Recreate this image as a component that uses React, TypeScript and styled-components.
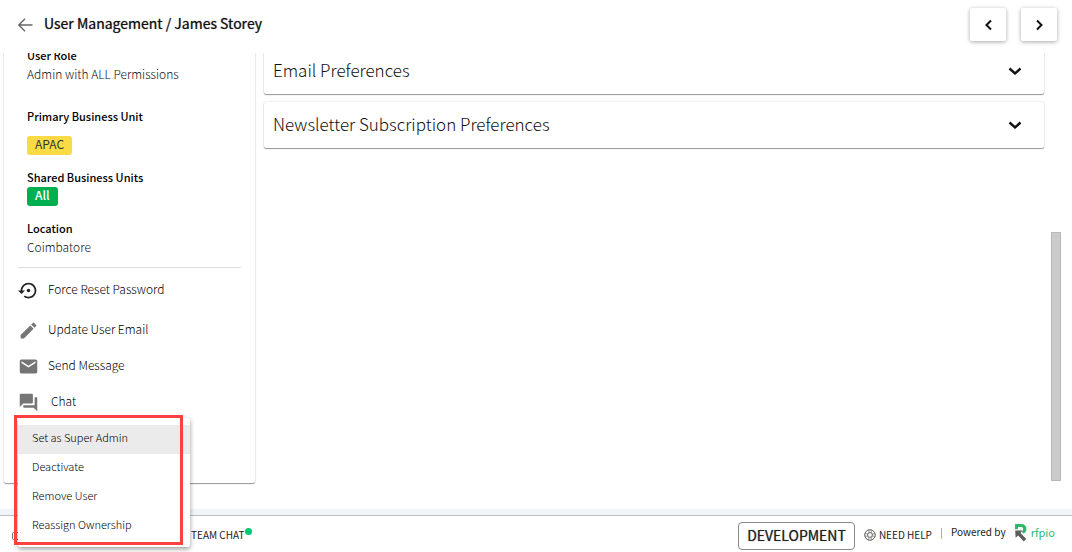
import React from "react";
import styled, { createGlobalStyle } from "styled-components";
import { MdEdit, MdEmail, MdForum, MdSettingsBackupRestore } from "react-icons/md";

const GlobalStyle = createGlobalStyle`
  *, *::before, *::after { box-sizing: border-box; }
  body {
    margin: 0;
    background: #fff;
    color: #222;
    font-family: "Noto Sans CJK SC", "Noto Sans", sans-serif;
    font-size: 12px;
    line-height: 18px;
  }
  button { font: inherit; color: inherit; border: 0; background: none; padding: 0; cursor: pointer; }
  a { color: inherit; text-decoration: none; }
  h1, h2, dl, dt, dd, ul { margin: 0; padding: 0; font: inherit; list-style: none; }
`;

const Page = styled.div`
  position: relative;
  display: flex;
  flex-direction: column;
  height: 100vh;
  overflow: hidden;
`;

const Header = styled.header`
  display: flex;
  flex: none;
  align-items: center;
  height: 53px;
  padding: 0 15px 4px 17px;
`;

const BackLink = styled.a`
  display: flex;
  margin-right: 11px;
`;

const Title = styled.h1`
  flex: 1;
  padding-bottom: 3px;
  font-size: 14px;
  color: #111;
  text-shadow: 0 0 1px rgba(0, 0, 0, 0.6);
`;

const Pager = styled.div`
  display: flex;
  gap: 15px;
`;

const PagerButton = styled.button`
  display: flex;
  align-items: center;
  justify-content: center;
  width: 36px;
  height: 33px;
  border-radius: 2px;
  background: #fff;
  box-shadow: 0 1px 4px rgba(0, 0, 0, 0.35);
`;

const Scroller = styled.main`
  display: flex;
  flex: 1;
  align-items: flex-start;
  min-height: 0;
  padding-right: 11px;
  overflow: hidden;
`;

const cardShadow = "0 1px 1px rgba(0, 0, 0, 0.38), 0 0 2px rgba(0, 0, 0, 0.2)";

const ProfileCard = styled.aside`
  flex: none;
  width: 251px;
  margin: -17px 9px 0 4px;
  padding: 10px 14px 63px;
  border-radius: 2px;
  background: #fff;
  box-shadow: ${cardShadow};
`;

const Details = styled.dl`
  display: flex;
  flex-direction: column;
  gap: 13px;
  padding: 0 9px 10px;
  border-bottom: 1px solid #ddd;
`;

const Detail = styled.div<{ $roomy?: boolean; $gap?: number }>`
  display: flex;
  flex-direction: column;
  align-items: flex-start;
  gap: ${(p) => p.$gap ?? 0}px;
  margin-top: ${(p) => (p.$roomy ? 10 : 0)}px;
`;

const Label = styled.dt`
  font-size: 11px;
  font-weight: 500;
  color: #000;
`;

const Value = styled.dd`
  font-weight: 300;
  color: #111;
  line-height: 20px;
`;

const Badge = styled.dd<{ $green?: boolean }>`
  padding: 0 8px 3px;
  border-radius: 3px;
  background: ${(p) => (p.$green ? "#00b050" : "#fadb46")};
  color: ${(p) => (p.$green ? "#fff" : "#333")};
  font-weight: ${(p) => (p.$green ? 500 : 400)};
  line-height: 16px;
`;

const Actions = styled.ul`
  display: flex;
  flex-direction: column;
`;

const Action = styled.button<{ $tall?: boolean; $dark?: boolean; $gap?: number }>`
  display: flex;
  align-items: center;
  gap: ${(p) => p.$gap ?? 9}px;
  width: 100%;
  height: ${(p) => (p.$tall ? 44 : 36)}px;
  color: #000;
  font-weight: 300;

  svg {
    width: 21px;
    height: 21px;
    color: ${(p) => (p.$dark ? "#222" : "#757575")};
  }

  span {
    padding-bottom: 3px;
  }
`;

const Panels = styled.section`
  display: flex;
  flex: 1;
  flex-direction: column;
  gap: 8px;
  min-width: 0;
  margin-top: -5px;
`;

const Panel = styled.button`
  display: flex;
  align-items: center;
  justify-content: space-between;
  height: 46px;
  padding: 0 22px 0 9px;
  border-radius: 2px;
  background: #fff;
  box-shadow: ${cardShadow};
  color: #111;
  font-size: 17px;
  font-weight: 300;

  span {
    padding-bottom: 3px;
  }
`;

const Thumb = styled.div`
  flex: none;
  width: 10px;
  height: 249px;
  margin: 179px 0 0 7px;
  border: 1px solid #b9b9b9;
  background: #cbcbcb;
`;

const Footer = styled.footer`
  display: flex;
  flex: none;
  align-items: center;
  justify-content: space-between;
  height: 43px;
  padding: 4px 17px 0 11px;
  border-top: 6px solid #f1f5f9;
  box-shadow: inset 0 1px #b9bec4;
  font-size: 10px;
`;

const FooterGroup = styled.div`
  display: flex;
  align-items: center;
`;

const ChatLink = styled.a`
  display: flex;
  gap: 1px;
  margin-left: 168px;
  padding-bottom: 1px;
`;

const OnlineDot = styled.span`
  width: 7px;
  height: 7px;
  margin-top: 2px;
  border-radius: 50%;
  background: #00c875;
`;

const EnvButton = styled.button`
  height: 28px;
  padding: 0 8px 1px;
  border: 1px solid #888;
  border-radius: 4px;
  font-size: 14px;
  text-shadow: 0 0 1px rgba(0, 0, 0, 0.6);
`;

const HelpLink = styled.a`
  display: flex;
  align-items: center;
  gap: 3px;
  margin-left: 9px;
  padding-bottom: 1px;
`;

const Divider = styled.span`
  width: 1px;
  height: 11px;
  margin: 0 9px 4px 9px;
  background: #e8a07c;
`;

const Powered = styled.a`
  display: flex;
  align-items: center;
  gap: 9px;
  padding-bottom: 7px;
`;

const Brand = styled.span`
  display: flex;
  align-items: center;
  gap: 4px;
  color: #2fb86b;
  font-size: 11px;

  svg {
    margin-top: 2px;
  }
`;

const Menu = styled.div`
  position: absolute;
  top: 418px;
  left: 18px;
  width: 172px;
  padding: 7px 0 6px;
  border-radius: 2px;
  background: #fff;
  box-shadow: 0 2px 5px rgba(0, 0, 0, 0.4);
`;

const MenuItem = styled.button<{ $active?: boolean }>`
  display: block;
  width: 100%;
  height: 29px;
  padding: 0 14px 6px;
  background: ${(p) => (p.$active ? "#ebebeb" : "transparent")};
  color: #000;
  font-size: 11px;
  font-weight: 300;
  text-align: left;
`;

const Highlight = styled.div`
  position: absolute;
  top: 415px;
  left: 14px;
  width: 169px;
  height: 130px;
  border: 3px solid #fb4141;
  pointer-events: none;
`;

function Chevron({ d, weight = 2 }: { d: string; weight?: number }) {
  return (
    <svg width="14" height="14" viewBox="0 0 14 14" fill="none" stroke="#111" strokeWidth={weight} aria-hidden="true">
      <path d={d} />
    </svg>
  );
}

function HelpIcon() {
  return (
    <svg width="12" height="12" viewBox="0 0 12 12" fill="none" stroke="#555" aria-hidden="true">
      <circle cx="6" cy="6" r="5.3" strokeWidth="0.9" />
      <circle cx="6" cy="6" r="2.4" strokeWidth="0.9" />
      <path d="M4.8 0.9V3.8M7.2 0.9V3.8M4.8 8.2V11.1M7.2 8.2V11.1M0.9 4.8H3.8M0.9 7.2H3.8M8.2 4.8H11.1M8.2 7.2H11.1" strokeWidth="0.6" />
    </svg>
  );
}

function RfpioLogo() {
  return (
    <svg width="12" height="18" viewBox="0 0 12 18" aria-hidden="true">
      <path d="M0 0H6.5A5 5 0 0 1 11.5 5A5 5 0 0 1 8.4 9.6L6.6 7.6Q8.2 6.8 8.2 5Q8.2 3 6 3H3V5.2H0Z" fill="#2fb86b" />
      <path d="M0.2 6.6H7.4L5.6 8.9L11.2 14.9L8.8 17.4L3.2 11.6L0.6 13.8Z" fill="#5d5d5d" />
    </svg>
  );
}

const menuItems = ["Set as Super Admin", "Deactivate", "Remove User", "Reassign Ownership"];

const panels = ["Email Preferences", "Newsletter Subscription Preferences"];

export default function App() {
  return (
    <Page>
      <GlobalStyle />
      <Header>
        <BackLink href="#users" aria-label="Back">
          <svg width="16" height="16" viewBox="0 0 16 16" fill="none" stroke="#666" strokeWidth="1.4">
            <path d="M15.5 8H2M8 1.8L1.8 8L8 14.2" />
          </svg>
        </BackLink>
        <Title>User Management / James Storey</Title>
        <Pager>
          <PagerButton aria-label="Previous user">
            <Chevron d="M10 2.5L5.5 7L10 11.5" />
          </PagerButton>
          <PagerButton aria-label="Next user">
            <Chevron d="M5 2.5L9.5 7L5 11.5" />
          </PagerButton>
        </Pager>
      </Header>

      <Scroller>
        <ProfileCard>
          <Details>
            <Detail>
              <Label>User Role</Label>
              <Value>Admin with ALL Permissions</Value>
            </Detail>
            <Detail $roomy $gap={11}>
              <Label>Primary Business Unit</Label>
              <Badge>APAC</Badge>
            </Detail>
            <Detail $gap={1}>
              <Label>Shared Business Units</Label>
              <Badge $green>All</Badge>
            </Detail>
            <Detail>
              <Label>Location</Label>
              <Value>Coimbatore</Value>
            </Detail>
          </Details>
          <Actions>
            <li>
              <Action $tall $dark>
                <MdSettingsBackupRestore />
                <span>Force Reset Password</span>
              </Action>
            </li>
            <li>
              <Action>
                <MdEdit />
                <span>Update User Email</span>
              </Action>
            </li>
            <li>
              <Action>
                <MdEmail />
                <span>Send Message</span>
              </Action>
            </li>
            <li>
              <Action $gap={12}>
                <MdForum />
                <span>Chat</span>
              </Action>
            </li>
          </Actions>
        </ProfileCard>

        <Panels>
          {panels.map((panel) => (
            <Panel key={panel}>
              <span>{panel}</span>
              <Chevron d="M1.5 4.5L7 9.5L12.5 4.5" weight={2.4} />
            </Panel>
          ))}
        </Panels>
        <Thumb />
      </Scroller>

      <Footer>
        <FooterGroup>
          <svg width="12" height="12" viewBox="0 0 12 12" fill="none" stroke="#777" aria-hidden="true">
            <rect x="1.5" y="2.5" width="9" height="7" rx="1" />
          </svg>
          <ChatLink href="#team-chat">
            TEAM CHAT
            <OnlineDot />
          </ChatLink>
        </FooterGroup>
        <FooterGroup>
          <EnvButton>DEVELOPMENT</EnvButton>
          <HelpLink href="#help">
            <HelpIcon />
            NEED HELP
          </HelpLink>
          <Divider />
          <Powered href="#rfpio">
            Powered by
            <Brand>
              <RfpioLogo />
              rfpio
            </Brand>
          </Powered>
        </FooterGroup>
      </Footer>

      <Menu role="menu">
        {menuItems.map((item, i) => (
          <MenuItem key={item} role="menuitem" $active={i === 0}>
            {item}
          </MenuItem>
        ))}
      </Menu>
      <Highlight />
    </Page>
  );
}
